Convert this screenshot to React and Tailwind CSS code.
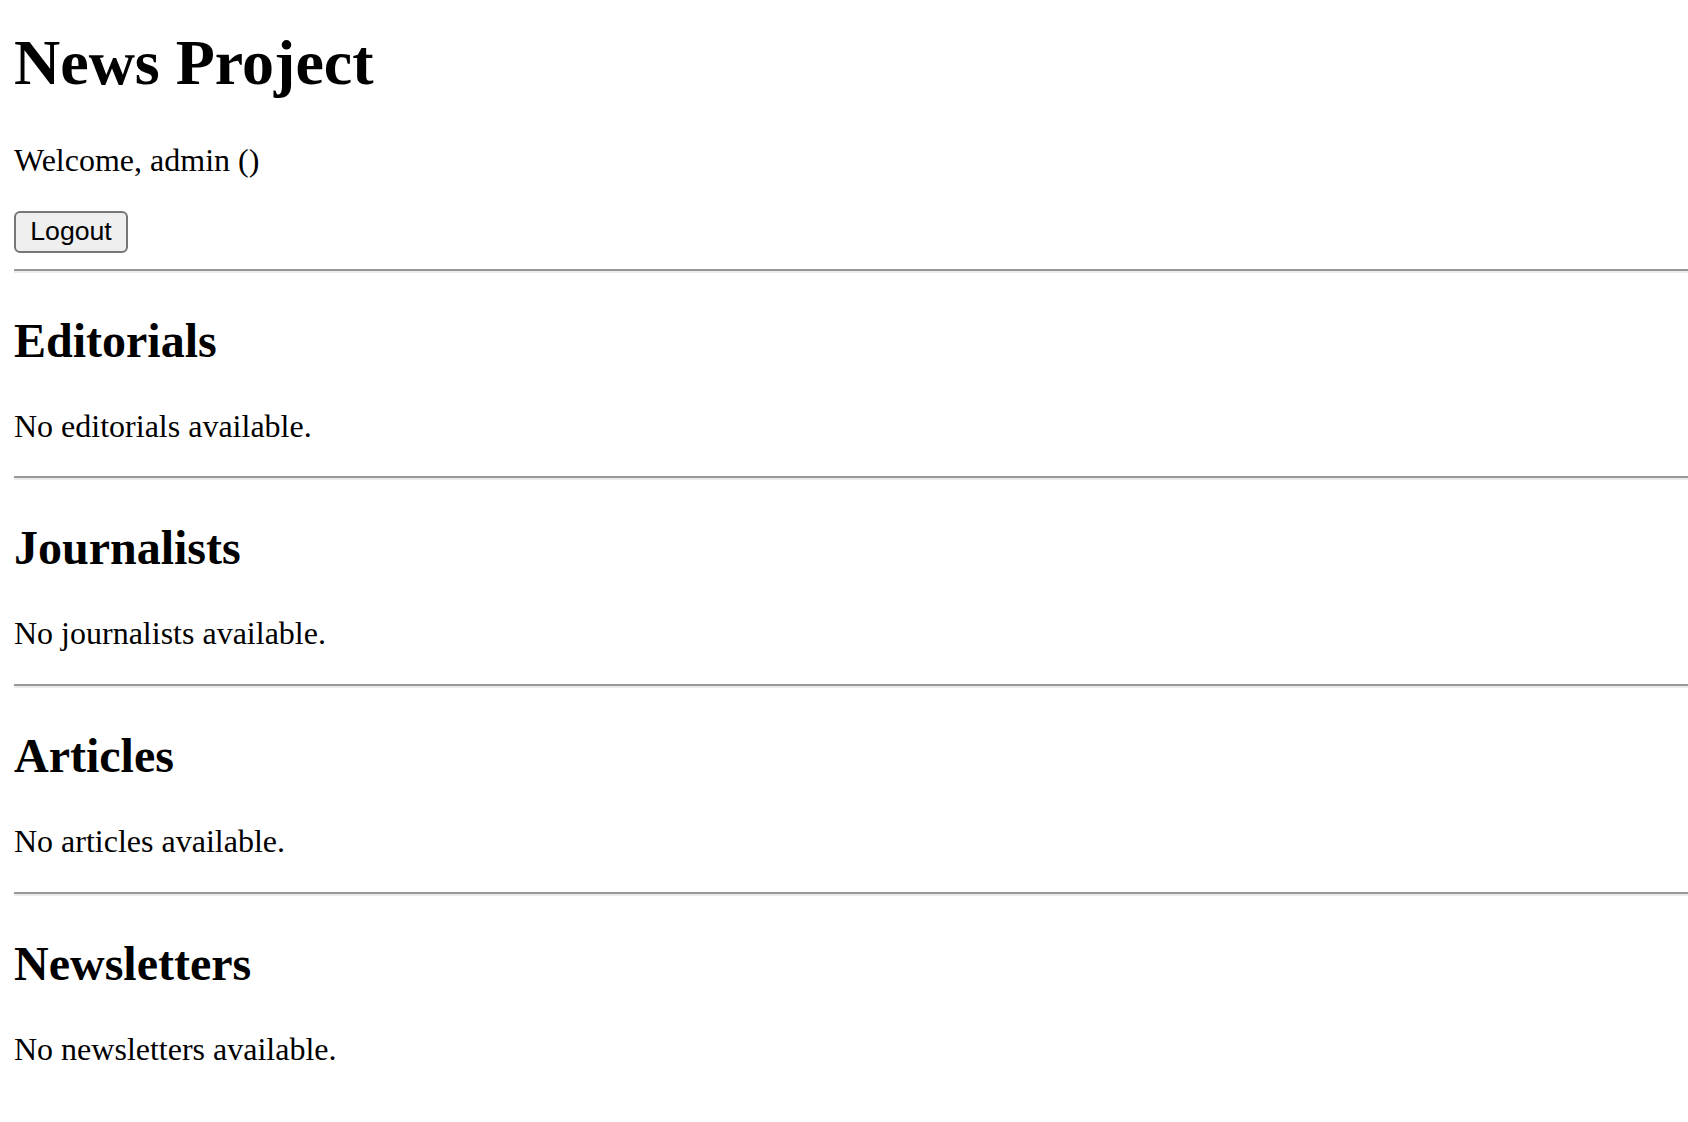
const sections = [
  { title: 'Editorials', empty: 'No editorials available.' },
  { title: 'Journalists', empty: 'No journalists available.' },
  { title: 'Articles', empty: 'No articles available.' },
  { title: 'Newsletters', empty: 'No newsletters available.' }
]

function Rule() {
  return <div className="h-[4px] w-full border-t-2 border-b-2 border-t-[#979797] border-b-[#ececec]" />
}

export default function App() {
  return (
    <div className="min-h-screen bg-white pl-[14px] pt-[25.5px] pb-[40px] font-['Liberation_Serif','Times_New_Roman',serif] text-black">
      <h1 className="text-[64px] font-bold leading-[73.6px]">News Project</h1>
      <p className="mt-[42.88px] text-[32px] leading-[36.8px]">Welcome, admin ()</p>

      <div className="mt-[32px] flex h-[42px] items-start">
        <button className="flex h-[42px] w-[114px] items-center justify-center rounded-[6px] border-2 border-[#767676] bg-[#efefef] font-['Liberation_Sans',Arial,sans-serif] text-[26.67px] leading-none text-black">
          Logout
        </button>
      </div>

      {sections.map((section) => (
        <div key={section.title}>
          {/* Divider before each section */}
          <div className="mt-[16px]">
            <Rule />
          </div>
          <h2 className="mt-[39.84px] text-[48px] font-bold leading-[55.2px]">{section.title}</h2>
          <p className="mt-[39.84px] text-[32px] leading-[36.8px]">{section.empty}</p>
          <div className="h-[16px]" />
        </div>
      ))}
    </div>
  )
}
